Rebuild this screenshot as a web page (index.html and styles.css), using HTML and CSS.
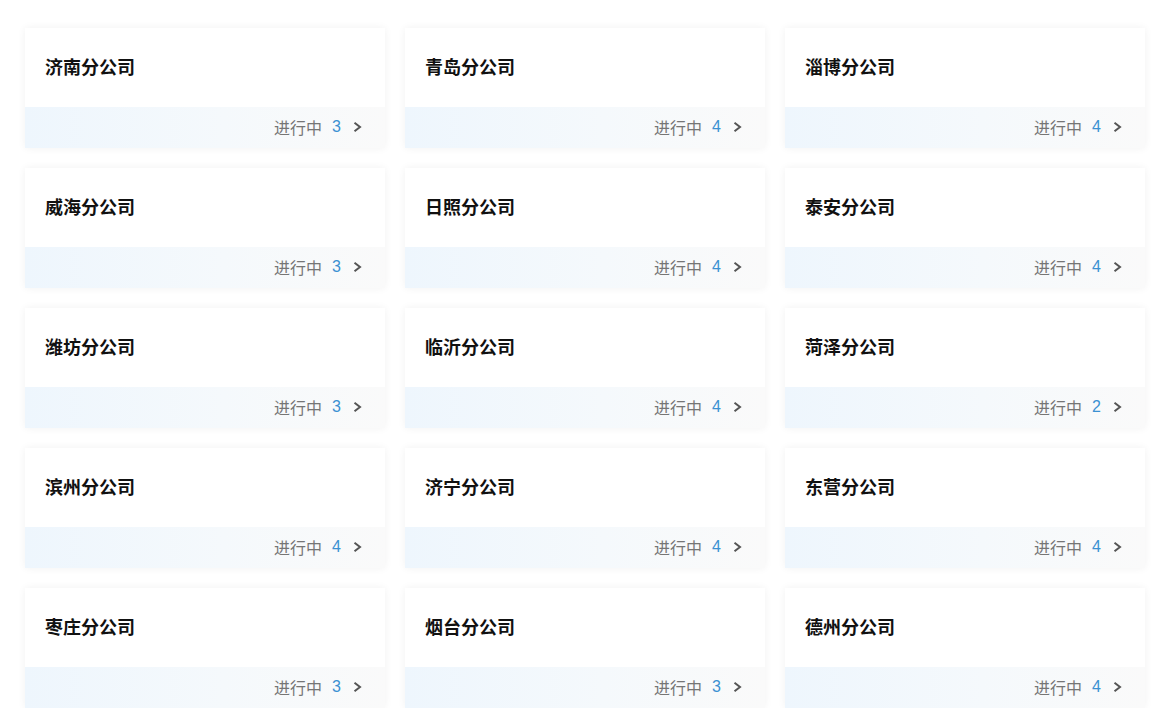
FILE: index.html
```html
<!DOCTYPE html>
<html lang="zh">
<head>
<meta charset="utf-8">
<title>分公司</title>
<link rel="stylesheet" href="styles.css">
</head>
<body>
<div class="grid">
  <div class="card"><div class="title">济南分公司</div><div class="foot"><span class="label">进行中</span><span class="num">3</span><svg class="chev" viewBox="0 0 9 12"><path d="M1.5 1.8 L7 6 L1.5 10.2"/></svg></div></div>
  <div class="card"><div class="title">青岛分公司</div><div class="foot"><span class="label">进行中</span><span class="num">4</span><svg class="chev" viewBox="0 0 9 12"><path d="M1.5 1.8 L7 6 L1.5 10.2"/></svg></div></div>
  <div class="card"><div class="title">淄博分公司</div><div class="foot"><span class="label">进行中</span><span class="num">4</span><svg class="chev" viewBox="0 0 9 12"><path d="M1.5 1.8 L7 6 L1.5 10.2"/></svg></div></div>
  <div class="card"><div class="title">威海分公司</div><div class="foot"><span class="label">进行中</span><span class="num">3</span><svg class="chev" viewBox="0 0 9 12"><path d="M1.5 1.8 L7 6 L1.5 10.2"/></svg></div></div>
  <div class="card"><div class="title">日照分公司</div><div class="foot"><span class="label">进行中</span><span class="num">4</span><svg class="chev" viewBox="0 0 9 12"><path d="M1.5 1.8 L7 6 L1.5 10.2"/></svg></div></div>
  <div class="card"><div class="title">泰安分公司</div><div class="foot"><span class="label">进行中</span><span class="num">4</span><svg class="chev" viewBox="0 0 9 12"><path d="M1.5 1.8 L7 6 L1.5 10.2"/></svg></div></div>
  <div class="card"><div class="title">潍坊分公司</div><div class="foot"><span class="label">进行中</span><span class="num">3</span><svg class="chev" viewBox="0 0 9 12"><path d="M1.5 1.8 L7 6 L1.5 10.2"/></svg></div></div>
  <div class="card"><div class="title">临沂分公司</div><div class="foot"><span class="label">进行中</span><span class="num">4</span><svg class="chev" viewBox="0 0 9 12"><path d="M1.5 1.8 L7 6 L1.5 10.2"/></svg></div></div>
  <div class="card"><div class="title">菏泽分公司</div><div class="foot"><span class="label">进行中</span><span class="num">2</span><svg class="chev" viewBox="0 0 9 12"><path d="M1.5 1.8 L7 6 L1.5 10.2"/></svg></div></div>
  <div class="card"><div class="title">滨州分公司</div><div class="foot"><span class="label">进行中</span><span class="num">4</span><svg class="chev" viewBox="0 0 9 12"><path d="M1.5 1.8 L7 6 L1.5 10.2"/></svg></div></div>
  <div class="card"><div class="title">济宁分公司</div><div class="foot"><span class="label">进行中</span><span class="num">4</span><svg class="chev" viewBox="0 0 9 12"><path d="M1.5 1.8 L7 6 L1.5 10.2"/></svg></div></div>
  <div class="card"><div class="title">东营分公司</div><div class="foot"><span class="label">进行中</span><span class="num">4</span><svg class="chev" viewBox="0 0 9 12"><path d="M1.5 1.8 L7 6 L1.5 10.2"/></svg></div></div>
  <div class="card"><div class="title">枣庄分公司</div><div class="foot"><span class="label">进行中</span><span class="num">3</span><svg class="chev" viewBox="0 0 9 12"><path d="M1.5 1.8 L7 6 L1.5 10.2"/></svg></div></div>
  <div class="card"><div class="title">烟台分公司</div><div class="foot"><span class="label">进行中</span><span class="num">3</span><svg class="chev" viewBox="0 0 9 12"><path d="M1.5 1.8 L7 6 L1.5 10.2"/></svg></div></div>
  <div class="card"><div class="title">德州分公司</div><div class="foot"><span class="label">进行中</span><span class="num">4</span><svg class="chev" viewBox="0 0 9 12"><path d="M1.5 1.8 L7 6 L1.5 10.2"/></svg></div></div>
</div>
</body>
</html>
```
FILE: styles.css
```css
html, body {
  margin: 0;
  padding: 0;
  background: #ffffff;
  font-family: "Noto Sans CJK SC", "Noto Sans", sans-serif;
}
.grid {
  display: grid;
  grid-template-columns: repeat(3, 360px);
  column-gap: 20px;
  row-gap: 20px;
  padding: 28px 0 0 25px;
}
.card {
  height: 120px;
  background: #fff;
  box-shadow: 0 0 8px rgba(0, 0, 0, 0.06);
  display: flex;
  flex-direction: column;
}
.title {
  height: 79px;
  box-sizing: border-box;
  padding: 0 0 4px 20px;
  display: flex;
  align-items: center;
  font-size: 18px;
  font-weight: 700;
  color: #111;
  line-height: 1;
}
.foot {
  height: 41px;
  box-sizing: border-box;
  padding: 0 23px 1px 0;
  display: flex;
  align-items: center;
  justify-content: flex-end;
  background: linear-gradient(90deg, #eef6fd 0%, #f5f9fc 55%, #fafafa 100%);
}
.label {
  font-size: 16px;
  color: #757575;
  line-height: 1;
}
.num {
  font-family: "Liberation Sans", Arial, sans-serif;
  font-size: 16px;
  color: #3b91d2;
  margin-left: 10px;
  line-height: 1;
}
.chev {
  width: 9px;
  height: 12px;
  margin-left: 12px;
}
.chev path {
  fill: none;
  stroke: #555;
  stroke-width: 2;
}
```
